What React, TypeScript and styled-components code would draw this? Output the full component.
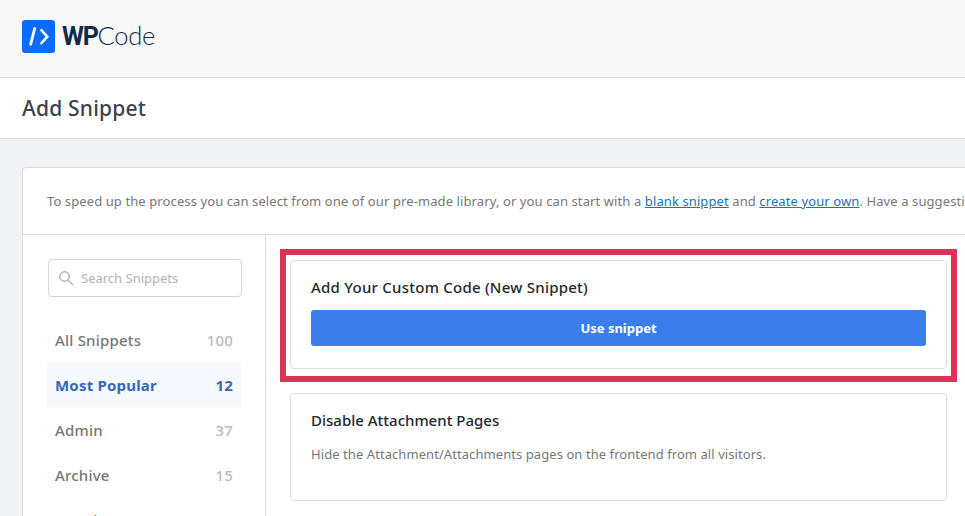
import React from 'react';
import styled, { createGlobalStyle } from 'styled-components';

const GlobalStyle = createGlobalStyle`
  html, body {
    margin: 0;
    padding: 0;
    height: 100%;
    overflow: hidden;
    background: #f2f3f5;
    font-family: "Noto Sans", "Open Sans", sans-serif;
  }
`;

const Header = styled.header`
  display: flex;
  align-items: center;
  gap: 7px;
  box-sizing: border-box;
  height: 78px;
  padding: 0 22px 5px;
  background: #f8f8f8;
  border-bottom: 1px solid #dddddd;
`;

const LogoText = styled.div`
  margin-bottom: 2px;
  font-family: Lato, sans-serif;
  font-size: 25.5px;
  letter-spacing: -0.3px;
  color: #0f2b46;
  font-weight: 300;

  b {
    font-family: Roboto, sans-serif;
    font-size: 25px;
    font-weight: 700;
    letter-spacing: -1.2px;
  }
`;

const TitleBar = styled.div`
  box-sizing: border-box;
  height: 61px;
  padding: 0 22px;
  display: flex;
  align-items: center;
  background: #ffffff;
  border-bottom: 1px solid #dddddd;
`;

const Title = styled.h1`
  margin: 0;
  font-size: 21px;
  letter-spacing: 0.2px;
  font-weight: 500;
  color: #3c434a;
`;

const Content = styled.div`
  padding: 28px 0 0 22px;
`;

const Panel = styled.section`
  width: 1100px;
  background: #ffffff;
  border: 1px solid #dddddd;
  border-radius: 4px 0 0 0;
`;

const Intro = styled.p`
  box-sizing: border-box;
  height: 67px;
  margin: 0;
  padding: 0 24px;
  display: flex;
  align-items: center;
  white-space: pre;
  font-size: 13px;
  letter-spacing: 0.1px;
  color: #777777;
  border-bottom: 1px solid #dddddd;

  a {
    color: #2271b1;
    text-decoration: underline;
  }
`;

const Columns = styled.div`
  display: flex;
  align-items: flex-start;
`;

const Sidebar = styled.aside`
  box-sizing: border-box;
  flex: 0 0 243px;
  height: 320px;
  padding: 24px 23px 0 24px;
  border-right: 1px solid #dddddd;
`;

const Search = styled.label`
  box-sizing: border-box;
  display: flex;
  align-items: center;
  gap: 7px;
  width: 194px;
  height: 38px;
  margin: 0 0 20px 1px;
  padding: 0 9px;
  border: 1px solid #d6d6d6;
  border-radius: 4px;
  color: #b4b4b4;
  font-size: 13px;
`;

const Row = styled.div<{ $active?: boolean }>`
  display: flex;
  align-items: center;
  justify-content: space-between;
  width: 194px;
  box-sizing: border-box;
  height: 45px;
  padding: 0 8px;
  font-size: 15px;
  letter-spacing: 0.2px;
  font-weight: ${p => (p.$active ? 700 : 500)};
  color: ${p => (p.$active ? '#3568b7' : '#777777')};
  background: ${p => (p.$active ? '#f5f9fe' : 'transparent')};
`;

const Count = styled.span<{ $active?: boolean }>`
  color: ${p => (p.$active ? '#3568b7' : '#bbbbbb')};
`;

const Main = styled.main`
  position: relative;
  flex: 1;
  display: flex;
  flex-direction: column;
  gap: 24px;
  padding: 25px 0 0 24px;
`;

const Highlight = styled.div`
  position: absolute;
  left: 14px;
  top: 14px;
  width: 677px;
  height: 133px;
  box-sizing: border-box;
  border: 6px solid #d93456;
`;

const Card = styled.article<{ $height: number }>`
  box-sizing: border-box;
  width: 657px;
  height: ${p => p.$height}px;
  padding: 16px 20px;
  border: 1px solid #dddddd;
  border-radius: 4px;
`;

const CardTitle = styled.h3<{ $spacing?: number }>`
  margin: 0;
  font-size: 15px;
  line-height: 20px;
  font-weight: 500;
  letter-spacing: ${p => p.$spacing ?? 0}px;
  color: #23282d;
`;

const CardText = styled.p`
  margin: 14px 0 0;
  font-size: 13px;
  line-height: 20px;
  letter-spacing: 0.07px;
  color: #777777;
`;

const UseButton = styled.button`
  display: block;
  width: 615px;
  height: 36px;
  margin-top: 13px;
  border: 0;
  border-radius: 3px;
  background: #3b7eeb;
  color: #ffffff;
  font-family: inherit;
  font-size: 13px;
  font-weight: 700;
`;

const categories = [
  { name: 'All Snippets', count: 100 },
  { name: 'Most Popular', count: 12, active: true },
  { name: 'Admin', count: 37 },
  { name: 'Archive', count: 15 },
  { name: 'Attachments', count: 42 },
];

const Logo = () => (
  <svg width="33" height="33" viewBox="0 0 33 33" aria-hidden="true">
    <rect width="33" height="33" rx="3" fill="#0a6cff" />
    <path d="M12.7 8.5 L8.7 24.2" stroke="#ffffff" strokeWidth="2.8" strokeLinecap="round" fill="none" />
    <path d="M18.7 9.3 L25.3 16.7 L18.7 24" stroke="#ffffff" strokeWidth="2.6" fill="none" />
  </svg>
);

const SearchIcon = () => (
  <svg width="16" height="16" viewBox="0 0 16 16" fill="none" stroke="#b4b4b4" strokeWidth="1.5" aria-hidden="true">
    <circle cx="6.5" cy="6.5" r="4.7" />
    <path d="M10 10 L15 15" />
  </svg>
);

export default function App() {
  return (
    <>
      <GlobalStyle />
      <Header>
        <Logo />
        <LogoText>
          <b>WP</b>Code
        </LogoText>
      </Header>
      <TitleBar>
        <Title>Add Snippet</Title>
      </TitleBar>
      <Content>
        <Panel>
          <Intro>
            To speed up the process you can select from one of our pre-made library, or you can start with a <a>blank snippet</a> and <a>create your own</a>. Have a suggestion for a new snippet? We'd love to hear it!
          </Intro>
          <Columns>
            <Sidebar>
              <Search>
                <SearchIcon />
                Search Snippets
              </Search>
              {categories.map(c => (
                <Row key={c.name} $active={c.active}>
                  {c.name}
                  <Count $active={c.active}>{c.count}</Count>
                </Row>
              ))}
            </Sidebar>
            <Main>
              <Highlight />
              <Card $height={109}>
                <CardTitle $spacing={0.24}>Add Your Custom Code (New Snippet)</CardTitle>
                <UseButton>Use snippet</UseButton>
              </Card>
              <Card $height={108}>
                <CardTitle>Disable Attachment Pages</CardTitle>
                <CardText>Hide the Attachment/Attachments pages on the frontend from all visitors.</CardText>
              </Card>
            </Main>
          </Columns>
        </Panel>
      </Content>
    </>
  );
}
